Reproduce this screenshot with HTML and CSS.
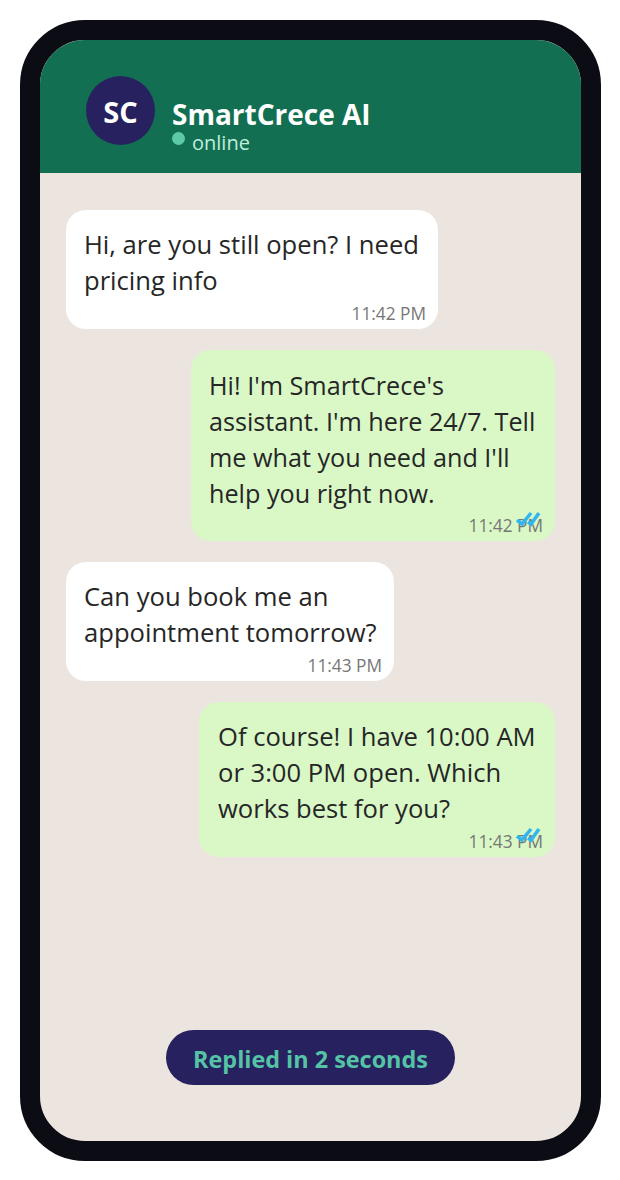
FILE: index.html
```html
<!DOCTYPE html>
<html>

<head>
    <title>SmartCrece AI chat</title>
    <link rel="stylesheet" href="styles.css">
</head>

<body>
    <div class="phone">
        <div class="header">
            <div class="avatar">SC</div>
            <div class="contact">
                <div class="name">SmartCrece AI</div>
                <div class="status"><span class="dot"></span>online</div>
            </div>
        </div>
        <div class="chat">
            <div class="bubble in first">
                <p>Hi, are you still open? I need<br>pricing info</p>
                <div class="time">11:42 PM</div>
            </div>
            <div class="bubble out second">
                <p>Hi! I'm SmartCrece's<br>assistant. I'm here 24/7. Tell<br>me what you need and I'll<br>help you right now.</p>
                <div class="time">11:42 PM
                    <svg class="ticks" viewBox="0 0 26 18"><path d="M1 9l5 4 9-11M12 11l3 2 8-11"/></svg>
                </div>
            </div>
            <div class="bubble in third">
                <p>Can you book me an<br>appointment tomorrow?</p>
                <div class="time">11:43 PM</div>
            </div>
            <div class="bubble out fourth">
                <p>Of course! I have 10:00 AM<br>or 3:00 PM open. Which<br>works best for you?</p>
                <div class="time">11:43 PM
                    <svg class="ticks" viewBox="0 0 26 18"><path d="M1 9l5 4 9-11M12 11l3 2 8-11"/></svg>
                </div>
            </div>
            <div class="pill">Replied in 2 seconds</div>
        </div>
    </div>
</body>

</html>
```

FILE: styles.css
```css
html,
body {
    margin: 0;
    padding: 0;
    background-color: white;
}

body {
    padding: 20px 19px 19px 20px;
    font-family: 'Open Sans', 'Noto Sans', sans-serif;
}

.phone {
    width: 541px;
    height: 1101px;
    border: 20px solid #0b0c14;
    border-radius: 65px;
    overflow: hidden;
    background-color: #ece5df;
    display: flex;
    flex-direction: column;
}

.header {
    height: 133px;
    flex-shrink: 0;
    background-color: #136f52;
    display: flex;
    padding: 36px 0 0 46px;
    box-sizing: border-box;
    gap: 17px;
}

.avatar {
    width: 69px;
    height: 69px;
    border-radius: 50%;
    background-color: #27225f;
    color: white;
    font-size: 29px;
    font-weight: 700;
    line-height: 71px;
    text-align: center;
}

.contact {
    padding-top: 21px;
}

.name {
    color: white;
    font-size: 28px;
    font-weight: 700;
    line-height: 34px;
}

.status {
    color: #bfeedd;
    font-size: 20px;
    line-height: 23px;
    position: relative;
    padding-left: 20px;
}

.dot {
    position: absolute;
    left: 0;
    top: 1px;
    width: 13px;
    height: 13px;
    border-radius: 50%;
    background-color: #5cc9a7;
}

.chat {
    flex: 1;
    padding: 37px 26px 56px;
    display: flex;
    flex-direction: column;
    align-items: flex-start;
}

.bubble {
    position: relative;
    box-sizing: border-box;
    border-radius: 20px;
    padding: 17px 18px 0;
    color: #262626;
    font-size: 25.6px;
    white-space: nowrap;
}

.bubble p {
    margin: 0;
    line-height: 36px;
}

.in {
    background-color: white;
}

.out {
    background-color: #d9f8c6;
    align-self: flex-end;
}

.first {
    width: 372px;
    height: 119px;
}

.second {
    width: 364px;
    height: 191px;
    margin-top: 21px;
}

.second p {
    font-size: 25.2px;
}

.third {
    width: 328px;
    height: 119px;
    margin-top: 21px;
}

.fourth {
    width: 356px;
    height: 155px;
    margin-top: 21px;
    padding-left: 19px;
}

.time {
    position: absolute;
    right: 12px;
    bottom: 4px;
    font-size: 17.3px;
    line-height: 22px;
    color: #777777;
}

.ticks {
    position: absolute;
    right: 1px;
    top: -4px;
    width: 26px;
    height: 18px;
    fill: none;
    stroke: #2fb6f0;
    stroke-width: 3.5;
}

.pill {
    margin: auto auto 0;
    width: 289px;
    height: 55px;
    border-radius: 28px;
    background-color: #27225f;
    color: #55c3a5;
    font-size: 23.4px;
    font-weight: 700;
    line-height: 58px;
    text-align: center;
}
```
